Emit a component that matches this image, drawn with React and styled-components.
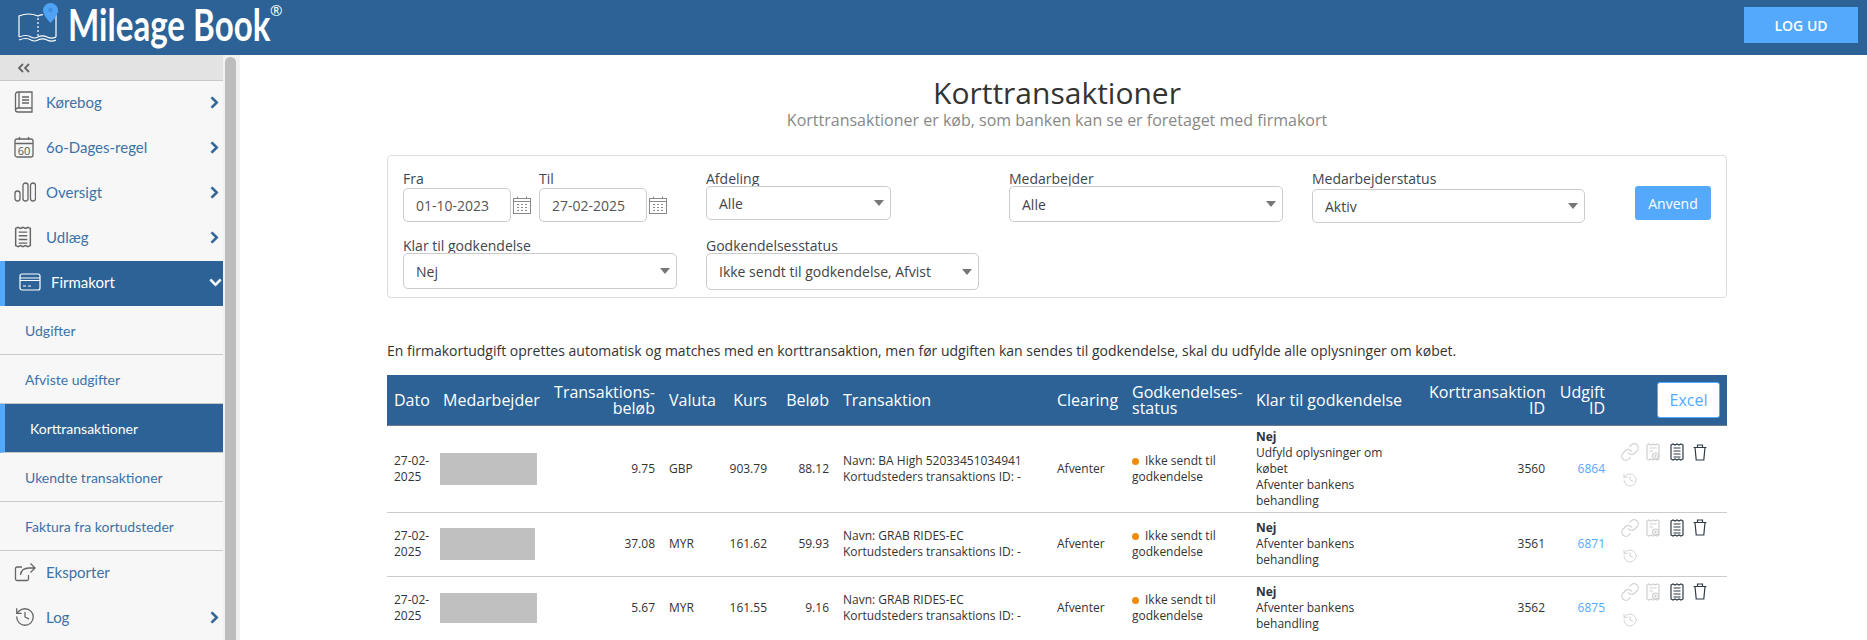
import React from "react";
import styled, { createGlobalStyle } from "styled-components";
import { FaChevronRight, FaChevronDown } from "react-icons/fa";
import { History, Link as LinkIcon } from "lucide-react";

const Global = createGlobalStyle`
  html, body { margin: 0; padding: 0; height: 640px; overflow: hidden; background: #fff; }
  body { font-family: "Open Sans", "Liberation Sans", sans-serif; font-size: 14px; color: #333; }
  * { box-sizing: border-box; }
`;

const Page = styled.div`
  width: 1867px;
  height: 640px;
  display: flex;
  flex-direction: column;
  overflow: hidden;
`;
const Header = styled.header`
  height: 55px;
  flex: none;
  background: #2c6295;
  display: flex;
  align-items: center;
  justify-content: space-between;
  padding: 0 9px 5px 0;
`;
const Logo = styled.div`
  display: flex;
  align-items: flex-start;
  height: 50px;
`;
const LogoText = styled.span`
  display: inline-block;
  font-family: Lato, "Open Sans", sans-serif;
  font-weight: 700;
  font-size: 43px;
  line-height: 50px;
  color: #fff;
  margin-left: 7px;
  width: 202px;
  white-space: nowrap;
  transform: scaleX(0.77);
  transform-origin: left top;
`;
const Registered = styled.span`
  font-family: "Open Sans", sans-serif;
  font-size: 15px;
  color: #fff;
  line-height: 15px;
  margin-top: 3px;
`;
const LogoutButton = styled.button`
  width: 114px;
  height: 36px;
  border: 0;
  background: #54a9fd;
  color: #fff;
  font-family: "Open Sans", sans-serif;
  font-weight: 600;
  font-size: 14px;
`;
const Body = styled.div`
  flex: 1;
  display: flex;
  min-height: 0;
`;
const Sidebar = styled.nav`
  width: 223px;
  flex: none;
  background: #f7f7f7;
  font-family: Lato, "Open Sans", sans-serif;
  font-size: 15px;
  overflow: hidden;
`;
const Track = styled.div`
  width: 17px;
  flex: none;
  background: #f1f1f1;
  padding: 2px 4px 0 2px;
`;
const Thumb = styled.div`
  height: 100%;
  background: #bdbdbd;
  border-radius: 6px 6px 0 0;
`;
const Collapse = styled.div`
  height: 26px;
  background: #e3e3e3;
  border-bottom: 1px solid #c9c9c9;
  padding-left: 17px;
  display: flex;
  align-items: center;
`;
const MenuItem = styled.div`
  height: 45px;
  display: flex;
  align-items: center;
  padding-left: 14px;
  padding-right: ${(p) => (p.$active ? "1px" : "2px")};
  padding-bottom: 3px;
  color: ${(p) => (p.$active ? "#fff" : "#3c72a8")};
  background: ${(p) => (p.$active ? "#2c6295" : "transparent")};
  border-left: ${(p) => (p.$active ? "5px solid #54a9fd" : "0")};
`;
const IconSlot = styled.span`
  width: 32px;
  display: inline-flex;
  align-items: center;
  flex: none;
`;
const MenuLabel = styled.span`
  flex: 1;
`;
const Chevron = styled.span`
  display: inline-flex;
  color: ${(p) => (p.$active ? "#fff" : "#2c6295")};
  font-size: 13px;
  svg {
    stroke: currentColor;
    stroke-width: 30;
  }
`;
const SubItem = styled.div`
  height: 49px;
  display: flex;
  align-items: center;
  font-size: 14px;
  padding-left: 25px;
  border-bottom: 1px solid #c9c9c9;
  color: ${(p) => (p.$active ? "#fff" : "#3c72a8")};
  background: ${(p) => (p.$active ? "#2c6295" : "transparent")};
  border-left: ${(p) => (p.$active ? "5px solid #54a9fd" : "0")};
`;

const Main = styled.main`
  flex: 1;
  padding: 18px 0 0 147px;
  min-width: 0;
`;
const Content = styled.div`
  width: 1340px;
`;
const Title = styled.h1`
  margin: 0;
  text-align: center;
  font-size: 30px;
  font-weight: 400;
  line-height: 40px;
  color: #333;
`;
const Subtitle = styled.p`
  margin: -3px 0 0;
  text-align: center;
  font-size: 16px;
  line-height: 20px;
  color: #888;
`;
const FilterCard = styled.section`
  margin-top: 25px;
  height: 143px;
  border: 1px solid #ddd;
  border-radius: 4px;
  padding: 14px 0 0 15px;
`;
const FilterRow = styled.div`
  display: flex;
  align-items: flex-start;
  height: ${(p) => p.$h}px;
`;
const Field = styled.div`
  width: ${(p) => p.$w}px;
  flex: none;
`;
const FieldLabel = styled.label`
  display: block;
  font-size: 14px;
  line-height: 18px;
  color: #3d4650;
`;
const DateGroup = styled.div`
  display: flex;
  align-items: center;
  gap: 2px;
`;
const DateInput = styled.input`
  width: 108px;
  height: 34px;
  border: 1px solid #ccc;
  border-radius: 5px;
  padding: 0 12px;
  font-family: inherit;
  font-size: 14px;
  color: #555;
  outline: none;
`;
const SelectBox = styled.div`
  position: relative;
  width: ${(p) => p.$w}px;
  margin-top: ${(p) => p.$mt}px;
  &::after {
    content: "";
    position: absolute;
    right: 7px;
    top: 50%;
    margin-top: -3px;
    border-left: 5px solid transparent;
    border-right: 5px solid transparent;
    border-top: 6px solid #777;
  }
`;
const Select = styled.select`
  display: block;
  width: 100%;
  height: ${(p) => p.$h}px;
  appearance: none;
  background: #fff;
  border: 1px solid #ccc;
  border-radius: 5px;
  padding: 0 12px;
  font-family: inherit;
  font-size: 14px;
  color: #444;
  outline: none;
`;
const ApplyButton = styled.button`
  width: 76px;
  height: 34px;
  margin-top: 16px;
  border: 0;
  border-radius: 3px;
  background: #54a9fd;
  color: #fff;
  font-family: inherit;
  font-size: 14px;
`;
const Intro = styled.p`
  margin: 43px 0 0;
  font-size: 14px;
  line-height: 20px;
  color: #333;
`;
const Table = styled.table`
  margin-top: 14px;
  width: 1340px;
  table-layout: fixed;
  border-collapse: collapse;
`;
const Th = styled.th`
  height: 50px;
  padding: 0 7px;
  background: #2c6295;
  border-bottom: 1px solid #6c7a88;
  color: #fff;
  font-size: 16px;
  font-weight: 400;
  line-height: 16px;
  text-align: ${(p) => p.$align || "left"};
  vertical-align: middle;
`;
const ExcelButton = styled.button`
  display: block;
  margin-left: auto;
  width: 63px;
  height: 36px;
  background: #fff;
  border: 1px solid #54a9fd;
  border-radius: 3px;
  color: #54a9fd;
  font-family: inherit;
  font-size: 16px;
  padding: 0;
`;
const Tr = styled.tr`
  height: ${(p) => p.$h}px;
  border-bottom: 1px solid #ccc;
`;
const Td = styled.td`
  padding: 0 7px;
  font-size: 12px;
  line-height: 16px;
  color: #333;
  text-align: ${(p) => p.$align || "left"};
  vertical-align: middle;
`;
const DateCell = styled(Td)`
  padding-right: 0;
  white-space: nowrap;
`;
const Redacted = styled.div`
  background: #c0c0c0;
  width: ${(p) => p.$w}px;
  height: ${(p) => p.$h}px;
  margin-left: -3px;
`;
const StatusDot = styled.span`
  display: inline-block;
  width: 7px;
  height: 7px;
  border-radius: 50%;
  background: #ee8c0c;
  margin-right: 6px;
  vertical-align: 0;
`;
const ReadyText = styled.div`
  width: 135px;
`;
const Strong = styled.div`
  font-weight: 700;
`;
const IdLink = styled.a`
  color: #54a9fd;
  text-decoration: none;
`;
const ActionGrid = styled.div`
  display: grid;
  grid-template-columns: repeat(4, 23.5px);
  grid-auto-rows: 18px;
  row-gap: 10px;
  justify-items: center;
  align-items: center;
  margin: -5px 0 0 -1px;
`;

const ReceiptGlyph = ({ color, plus, w = 14, h = 18, sw = 1.2 }) => (
  <svg width={w} height={h} viewBox="0 0 14 18" fill="none" stroke={color} strokeWidth={sw}>
    <path d="M1 2 L3 1 L5 2 L7 1 L9 2 L11 1 L13 2 V16 L11 17 L9 16 L7 17 L5 16 L3 17 L1 16 Z" />
    {plus ? (
      <>
        <path d="M3.5 5H10.5M3.5 8H7" />
        <circle cx="9.5" cy="13" r="3" fill="#fff" />
        <path d="M9.5 11.5V14.5M8 13H11" />
      </>
    ) : (
      <path d="M3.5 5H10.5M3.5 8H10.5M3.5 11H10.5M3.5 14H10.5" />
    )}
  </svg>
);
const TrashGlyph = () => (
  <svg width="14" height="17" viewBox="0 0 14 17" fill="none" stroke="#2f3b46" strokeWidth="1.2">
    <path d="M0.5 3.5H13.5M4.5 3.5V1H9.5V3.5M2 3.5L3.2 16H10.8L12 3.5" />
  </svg>
);
const BookGlyph = () => (
  <svg width="20" height="22" viewBox="0 0 20 22" fill="none" stroke="#666" strokeWidth="1.3">
    <path d="M4 1H18V17H4C2.5 17 1.5 18 1.5 19.2C1.5 20.4 2.5 21 4 21H18V17M1.5 19V3.5C1.5 2 2.5 1 4 1M5 1V17" />
    <path d="M8 6H15M8 9H15M8 12H15" />
  </svg>
);
const CalendarGlyph = () => (
  <svg width="20" height="22" viewBox="0 0 20 22" fill="none" stroke="#666" strokeWidth="1.3">
    <rect x="1" y="3" width="18" height="18" rx="2" />
    <path d="M1 7.5H19M5.5 1V4M14.5 1V4" />
    <text x="10" y="18.5" fontSize="11" fontFamily="Open Sans" fill="#555" stroke="none" textAnchor="middle">60</text>
  </svg>
);
const BarsGlyph = () => (
  <svg width="22" height="20" viewBox="0 0 22 20" fill="none" stroke="#666" strokeWidth="1.3">
    <rect x="1" y="9" width="5" height="10" rx="2.5" />
    <rect x="9" y="1" width="5" height="18" rx="2.5" />
    <rect x="16.5" y="1" width="5" height="18" rx="2.5" />
  </svg>
);
const CardGlyph = () => (
  <svg width="22" height="18" viewBox="0 0 22 18" fill="none" stroke="#fff" strokeWidth="1.2">
    <rect x="1" y="1" width="20" height="16" rx="2" />
    <path d="M1 5H21M1 7.5H21M4 13H7M9 13H12" />
  </svg>
);
const ExportGlyph = () => (
  <svg width="22" height="20" viewBox="0 0 22 20" fill="none" stroke="#666" strokeWidth="1.3">
    <path d="M8 5H3C2 5 1.5 5.5 1.5 6.5V17C1.5 18 2 18.5 3 18.5H13C14 18.5 14.5 18 14.5 17V13" />
    <path d="M6.5 13C7 8.5 10.5 6 15 6H20.5M16.5 1.5L21 6L16.5 10.5" />
  </svg>
);
const SmallCalendar = () => (
  <svg width="18" height="18" viewBox="0 0 18 18" fill="none" stroke="#8a8a8a" strokeWidth="1">
    <rect x="0.5" y="2.5" width="17" height="15" />
    <path d="M0.5 5.5H17.5M4.5 0.5V3M13.5 0.5V3" />
    <path d="M4 8.5H6M8 8.5H10M12 8.5H14M4 11.5H6M8 11.5H10M12 11.5H14M4 14.5H6M8 14.5H10M12 14.5H14" strokeWidth="1.2" />
  </svg>
);
const DoubleChevron = () => (
  <svg width="14" height="10" viewBox="0 0 14 10" fill="none" stroke="#666" strokeWidth="1.8">
    <path d="M6 1L2 5L6 9M12 1L8 5L12 9" />
  </svg>
);

const BrandMark = () => (
  <svg width="61" height="45" viewBox="0 0 61 45" fill="none">
    <g stroke="#fff" strokeWidth="1.2">
      <path d="M19 37V16C25 13.5 32 13.5 38 16C39 15.5 41 15 43 14.7M52 15H56V37" />
      <path d="M19 37C24 35 28 35 31 37C34 38.5 35 38.5 38 37C41 35.5 44 35.5 47 37C50 38.5 53 38.5 56 37" />
      <path d="M19 40C24 38 28 38 31 40C34 41.5 35 41.5 38 40C41 38.5 44 38.5 47 40C50 41.5 53 41.5 56 40" />
      <path d="M38 18V36" strokeDasharray="2 2" />
    </g>
    <path d="M50.5 3A7.5 7.5 0 0 1 58 10.5C58 15.5 50.5 23 50.5 23S43 15.5 43 10.5A7.5 7.5 0 0 1 50.5 3Z" fill="#4fa3f5" />
    <circle cx="50.5" cy="10" r="2.2" fill="#3f8fe0" />
  </svg>
);

const mainItems = [
  { label: "Kørebog", icon: <BookGlyph /> },
  { label: "6o-Dages-regel", icon: <CalendarGlyph /> },
  { label: "Oversigt", icon: <BarsGlyph /> },
  { label: "Udlæg", icon: <ReceiptGlyph color="#666" w={18} h={22} /> },
];
const subItems = ["Udgifter", "Afviste udgifter", "Korttransaktioner", "Ukendte transaktioner", "Faktura fra kortudsteder"];

const columns = [49, 111, 115, 56, 56, 62, 214, 75, 124, 173, 130, 60, 115];

const rows = [
  { h: 87, box: [97, 32], amount: "9.75", cur: "GBP", rate: "903.79", sum: "88.12", name: "BA High 52033451034941", ready: ["Udfyld oplysninger om købet", "Afventer bankens behandling"], tid: "3560", uid: "6864" },
  { h: 64, box: [95, 32], amount: "37.08", cur: "MYR", rate: "161.62", sum: "59.93", name: "GRAB RIDES-EC", ready: ["Afventer bankens behandling"], tid: "3561", uid: "6871" },
  { h: 64, box: [97, 30], amount: "5.67", cur: "MYR", rate: "161.55", sum: "9.16", name: "GRAB RIDES-EC", ready: ["Afventer bankens behandling"], tid: "3562", uid: "6875" },
];

export default function App() {
  return (
    <Page>
      <Global />
      <Header>
        <Logo>
          <BrandMark />
          <LogoText>Mileage Book</LogoText>
          <Registered>®</Registered>
        </Logo>
        <LogoutButton>LOG UD</LogoutButton>
      </Header>
      <Body>
        <Sidebar>
          <Collapse><DoubleChevron /></Collapse>
          {mainItems.map((m) => (
            <MenuItem key={m.label}>
              <IconSlot>{m.icon}</IconSlot>
              <MenuLabel>{m.label}</MenuLabel>
              <Chevron><FaChevronRight /></Chevron>
            </MenuItem>
          ))}
          <MenuItem $active>
            <IconSlot><CardGlyph /></IconSlot>
            <MenuLabel>Firmakort</MenuLabel>
            <Chevron $active><FaChevronDown /></Chevron>
          </MenuItem>
          {subItems.map((s) => (
            <SubItem key={s} $active={s === "Korttransaktioner"}>{s}</SubItem>
          ))}
          <MenuItem>
            <IconSlot><ExportGlyph /></IconSlot>
            <MenuLabel>Eksporter</MenuLabel>
          </MenuItem>
          <MenuItem>
            <IconSlot><History size={22} color="#666" strokeWidth={1.4} /></IconSlot>
            <MenuLabel>Log</MenuLabel>
            <Chevron><FaChevronRight /></Chevron>
          </MenuItem>
        </Sidebar>
        <Track><Thumb /></Track>
        <Main>
          <Content>
            <Title>Korttransaktioner</Title>
            <Subtitle>Korttransaktioner er køb, som banken kan se er foretaget med firmakort</Subtitle>
            <FilterCard>
              <FilterRow $h={67}>
                <Field $w={136}>
                  <FieldLabel>Fra</FieldLabel>
                  <DateGroup><DateInput readOnly value="01-10-2023" /><SmallCalendar /></DateGroup>
                </Field>
                <Field $w={167}>
                  <FieldLabel>Til</FieldLabel>
                  <DateGroup><DateInput readOnly value="27-02-2025" /><SmallCalendar /></DateGroup>
                </Field>
                <Field $w={303}>
                  <FieldLabel>Afdeling</FieldLabel>
                  <SelectBox $w={185} $mt={-2}><Select $h={34}><option>Alle</option></Select></SelectBox>
                </Field>
                <Field $w={303}>
                  <FieldLabel>Medarbejder</FieldLabel>
                  <SelectBox $w={274} $mt={-2}><Select $h={36}><option>Alle</option></Select></SelectBox>
                </Field>
                <Field $w={323}>
                  <FieldLabel>Medarbejderstatus</FieldLabel>
                  <SelectBox $w={273} $mt={1}><Select $h={34}><option>Aktiv</option></Select></SelectBox>
                </Field>
                <ApplyButton>Anvend</ApplyButton>
              </FilterRow>
              <FilterRow $h={52}>
                <Field $w={303}>
                  <FieldLabel>Klar til godkendelse</FieldLabel>
                  <SelectBox $w={274} $mt={-2}><Select $h={36}><option>Nej</option></Select></SelectBox>
                </Field>
                <Field $w={303}>
                  <FieldLabel>Godkendelsesstatus</FieldLabel>
                  <SelectBox $w={273} $mt={-2}><Select $h={37}><option>Ikke sendt til godkendelse, Afvist</option></Select></SelectBox>
                </Field>
              </FilterRow>
            </FilterCard>
            <Intro>En firmakortudgift oprettes automatisk og matches med en korttransaktion, men før udgiften kan sendes til godkendelse, skal du udfylde alle oplysninger om købet.</Intro>
            <Table>
              <colgroup>
                {columns.map((w, i) => <col key={i} style={{ width: w }} />)}
              </colgroup>
              <thead>
                <tr>
                  <Th>Dato</Th>
                  <Th>Medarbejder</Th>
                  <Th $align="right">Transaktions-<br />beløb</Th>
                  <Th>Valuta</Th>
                  <Th $align="right">Kurs</Th>
                  <Th $align="right">Beløb</Th>
                  <Th>Transaktion</Th>
                  <Th>Clearing</Th>
                  <Th>Godkendelses-<br />status</Th>
                  <Th>Klar til godkendelse</Th>
                  <Th $align="right">Korttransaktion<br />ID</Th>
                  <Th $align="right">Udgift<br />ID</Th>
                  <Th><ExcelButton>Excel</ExcelButton></Th>
                </tr>
              </thead>
              <tbody>
                {rows.map((r) => (
                  <Tr key={r.tid} $h={r.h}>
                    <DateCell>27-02-<br />2025</DateCell>
                    <Td><Redacted $w={r.box[0]} $h={r.box[1]} /></Td>
                    <Td $align="right">{r.amount}</Td>
                    <Td>{r.cur}</Td>
                    <Td $align="right">{r.rate}</Td>
                    <Td $align="right">{r.sum}</Td>
                    <Td>Navn: {r.name}<br />Kortudsteders transaktions ID: -</Td>
                    <Td>Afventer</Td>
                    <Td><StatusDot />Ikke sendt til<br />godkendelse</Td>
                    <Td>
                      <ReadyText>
                        <Strong>Nej</Strong>
                        {r.ready.map((t) => <div key={t}>{t}</div>)}
                      </ReadyText>
                    </Td>
                    <Td $align="right">{r.tid}</Td>
                    <Td $align="right"><IdLink>{r.uid}</IdLink></Td>
                    <Td>
                      <ActionGrid>
                        <LinkIcon size={20} color="#d4d4d4" strokeWidth={1.5} />
                        <ReceiptGlyph color="#cfcfcf" plus />
                        <ReceiptGlyph color="#2f3b46" />
                        <TrashGlyph />
                        <History size={16} color="#d4d4d4" strokeWidth={1.5} />
                      </ActionGrid>
                    </Td>
                  </Tr>
                ))}
              </tbody>
            </Table>
          </Content>
        </Main>
      </Body>
    </Page>
  );
}
